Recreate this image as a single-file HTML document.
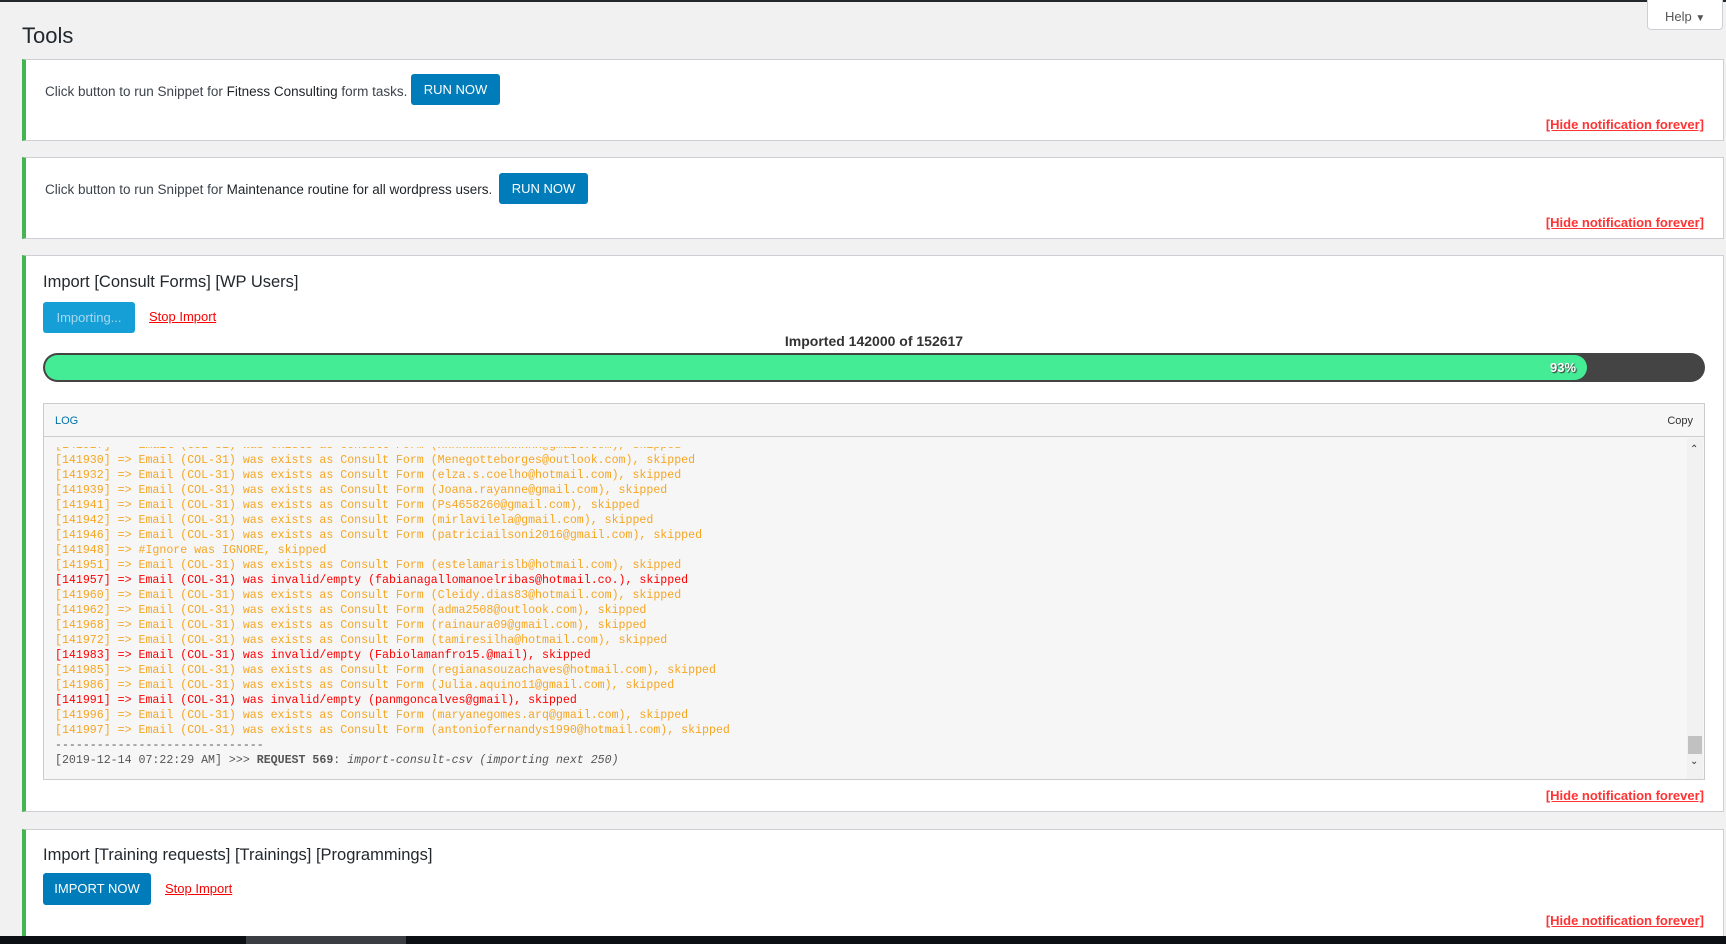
<!DOCTYPE html>
<html><head><meta charset="utf-8"><style>
*{box-sizing:border-box;margin:0;padding:0}
body{width:1726px;height:944px;overflow:hidden;background:#f1f1f1;font-family:"Liberation Sans",sans-serif;color:#23282d;position:relative}
.abs{position:absolute}
.topbar{left:0;top:0;width:1726px;height:2px;background:#23282d}
.help{left:1647px;top:0;width:76px;height:30px;background:#fff;border:1px solid #ccd0d4;border-top:none;border-radius:0 0 4px 4px;font-size:13px;color:#555;padding:9px 0 0 17px}
.title{left:22px;top:23px;font-size:22px;color:#23282d}
.box{left:22px;width:1702px;background:#fff;border:1px solid #ccd0d4;border-left:4px solid #46b450}
.txt{font-size:13.5px;color:#3c434a;white-space:nowrap}
.txt b{font-weight:normal;color:#1d2327}
.btn{background:#007cba;color:#fff;border-radius:3px;font-size:13px;text-align:center}
.hide{font-size:13px;font-weight:bold;color:#f33;text-decoration:underline;right:22px;white-space:nowrap}
.stop{font-size:13px;color:#f00;text-decoration:underline}
h2{font-size:16.5px;font-weight:normal;color:#23282d;white-space:nowrap}
.log{left:43px;top:403px;width:1662px;height:377px;background:#f6f6f6;border:1px solid #ccc;overflow:hidden}
.logh{height:33px;border-bottom:1px solid #ccc}
pre{font-family:"Liberation Mono",monospace;font-size:11.6px;line-height:15px;color:#f5a623;position:absolute;left:11px}
.r{color:#f00}
.g{color:#555}
</style></head><body>
<div class="abs topbar"></div>
<div class="abs help">Help <span style="font-size:10px">▼</span></div>
<div class="abs title">Tools</div>

<div class="abs box" style="top:59px;height:82px"></div>
<div class="abs txt" style="left:45px;top:84px">Click button to run Snippet for <b>Fitness Consulting</b> form tasks.</div>
<div class="abs btn" style="left:411px;top:74px;width:89px;height:31px;line-height:31px">RUN NOW</div>
<div class="abs hide" style="top:117px">[Hide notification forever]</div>

<div class="abs box" style="top:157px;height:82px"></div>
<div class="abs txt" style="left:45px;top:182px">Click button to run Snippet for <b>Maintenance routine for all wordpress users</b>.</div>
<div class="abs btn" style="left:499px;top:173px;width:89px;height:31px;line-height:31px">RUN NOW</div>
<div class="abs hide" style="top:215px">[Hide notification forever]</div>

<div class="abs box" style="top:255px;height:557px"></div>
<h2 class="abs" style="left:43px;top:273px">Import [Consult Forms] [WP Users]</h2>
<div class="abs btn" style="left:43px;top:302px;width:92px;height:31px;line-height:31px;background:#169fd6;color:#a8d8ef">Importing...</div>
<div class="abs stop" style="left:149px;top:309px">Stop Import</div>
<div class="abs" style="left:43px;width:1662px;top:333px;text-align:center;font-size:14px;font-weight:bold;color:#333">Imported 142000 of 152617</div>
<div class="abs" style="left:43px;top:353px;width:1662px;height:29px;background:#444;border-radius:15px;overflow:hidden">
 <div style="position:absolute;left:2px;top:2px;height:25px;width:1542px;background:#44ec96;border-radius:13px"></div>
 <div style="position:absolute;left:1507px;top:7px;font-size:13px;font-weight:bold;color:#fff;text-shadow:1px 1px 1px #333">93%</div>
</div>
<div class="abs log">
 <div class="logh"><span style="position:absolute;left:11px;top:11px;font-size:11px;color:#0073aa">LOG</span><span style="position:absolute;right:11px;top:11px;font-size:11px;color:#333">Copy</span></div>
 <div style="position:absolute;left:0;top:34px;width:1660px;height:9px;background:#f6f6f6;z-index:2"></div>
 <div style="position:absolute;right:1px;top:34px;width:16px;height:341px;background:#f1f1f1;z-index:3"><div style="position:absolute;left:3px;top:6px;font-size:10px;color:#333">⌃</div><div style="position:absolute;left:1px;top:298px;width:14px;height:18px;background:#c1c1c1"></div><div style="position:absolute;left:3px;top:318px;font-size:10px;color:#333">⌄</div></div>
<pre style="top:34px">[141927] =&gt; Email (COL-31) was exists as Consult Form (xxxxxxxxxxxxxxx@gmail.com), skipped
[141930] =&gt; Email (COL-31) was exists as Consult Form (Menegotteborges@outlook.com), skipped
[141932] =&gt; Email (COL-31) was exists as Consult Form (elza.s.coelho@hotmail.com), skipped
[141939] =&gt; Email (COL-31) was exists as Consult Form (Joana.rayanne@gmail.com), skipped
[141941] =&gt; Email (COL-31) was exists as Consult Form (Ps4658260@gmail.com), skipped
[141942] =&gt; Email (COL-31) was exists as Consult Form (mirlavilela@gmail.com), skipped
[141946] =&gt; Email (COL-31) was exists as Consult Form (patriciailsoni2016@gmail.com), skipped
[141948] =&gt; #Ignore was IGNORE, skipped
[141951] =&gt; Email (COL-31) was exists as Consult Form (estelamarislb@hotmail.com), skipped
<span class="r">[141957] =&gt; Email (COL-31) was invalid/empty (fabianagallomanoelribas@hotmail.co.), skipped</span>
[141960] =&gt; Email (COL-31) was exists as Consult Form (Cleidy.dias83@hotmail.com), skipped
[141962] =&gt; Email (COL-31) was exists as Consult Form (adma2508@outlook.com), skipped
[141968] =&gt; Email (COL-31) was exists as Consult Form (rainaura09@gmail.com), skipped
[141972] =&gt; Email (COL-31) was exists as Consult Form (tamiresilha@hotmail.com), skipped
<span class="r">[141983] =&gt; Email (COL-31) was invalid/empty (Fabiolamanfro15.@mail), skipped</span>
[141985] =&gt; Email (COL-31) was exists as Consult Form (regianasouzachaves@hotmail.com), skipped
[141986] =&gt; Email (COL-31) was exists as Consult Form (Julia.aquino11@gmail.com), skipped
<span class="r">[141991] =&gt; Email (COL-31) was invalid/empty (panmgoncalves@gmail), skipped</span>
[141996] =&gt; Email (COL-31) was exists as Consult Form (maryanegomes.arq@gmail.com), skipped
[141997] =&gt; Email (COL-31) was exists as Consult Form (antoniofernandys1990@hotmail.com), skipped
<span class="g">------------------------------
[2019-12-14 07:22:29 AM] &gt;&gt;&gt; <b>REQUEST 569</b>: <i>import-consult-csv (importing next 250)</i></span></pre>
</div>
<div class="abs hide" style="top:788px">[Hide notification forever]</div>

<div class="abs box" style="top:829px;height:115px"></div>
<h2 class="abs" style="left:43px;top:846px">Import [Training requests] [Trainings] [Programmings]</h2>
<div class="abs btn" style="left:43px;top:873px;width:108px;height:32px;line-height:32px">IMPORT NOW</div>
<div class="abs stop" style="left:165px;top:881px">Stop Import</div>
<div class="abs hide" style="top:913px">[Hide notification forever]</div>

<div class="abs" style="left:0;top:936px;width:1726px;height:8px;background:#0c1014"></div>
<div class="abs" style="left:246px;top:936px;width:160px;height:8px;background:#3a3d41"></div>
</body></html>
